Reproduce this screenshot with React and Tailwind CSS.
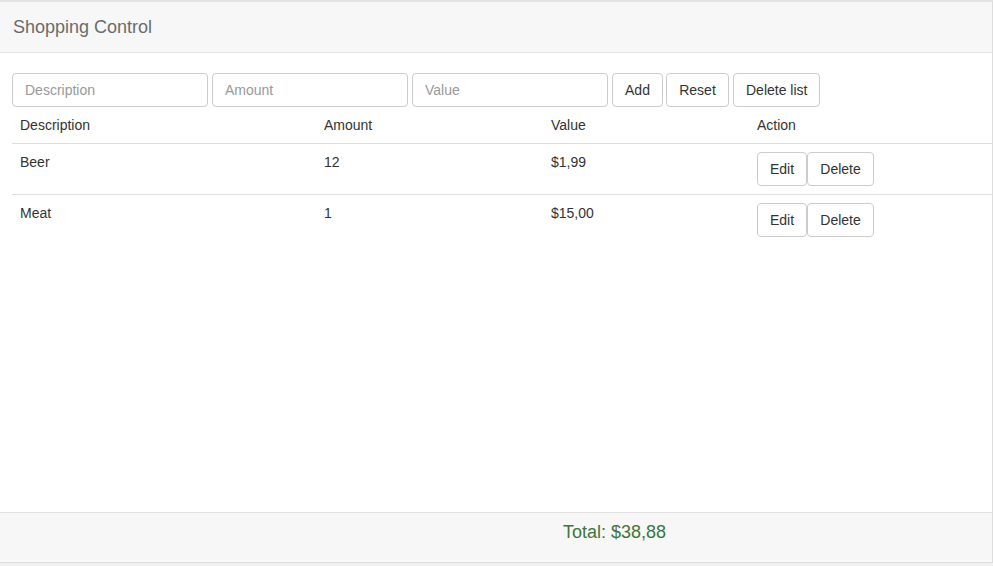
const items = [
  { id: 1, description: 'Beer', amount: 12, value: '$1,99' },
  { id: 2, description: 'Meat', amount: 1, value: '$15,00' },
]

const btn =
  'h-[34px] px-3 bg-white border border-[#ccc] rounded text-[14px] text-[#333] leading-none whitespace-nowrap'

export default function App() {
  return (
    <div
      className="min-h-[566px] bg-[#f0f0f0] text-[14px] text-[#333]"
      style={{ fontFamily: '"Liberation Sans", Arial, sans-serif' }}
    >
      <div className="bg-white border-r border-b border-[#ddd] border-t-2 border-t-[#e3e3e3] flex flex-col h-[563px]">
        <div className="h-[51px] bg-[#f7f7f7] border-b border-[#e6e6e6] flex items-center px-[13px]">
          <h3 className="text-[18px] text-[#6b6b6b]">Shopping Control</h3>
        </div>

        <div className="flex-1 pt-5 pl-3">
          <div className="flex items-center h-[34px]">
            <input placeholder="Description" className="w-[196px] h-[34px] border border-[#ccc] rounded px-3 placeholder:text-[#999] mr-1" />
            <input placeholder="Amount" className="w-[196px] h-[34px] border border-[#ccc] rounded px-3 placeholder:text-[#999] mr-1" />
            <input placeholder="Value" className="w-[196px] h-[34px] border border-[#ccc] rounded px-3 placeholder:text-[#999] mr-1" />
            <button className={`${btn} w-[51px] mr-[3px]`}>Add</button>
            <button className={`${btn} w-[63px] mr-[4px]`}>Reset</button>
            <button className={`${btn} w-[87px]`}>Delete list</button>
          </div>

          <table className="w-[981px] mt-[5px] border-collapse">
            <thead>
              <tr className="border-b border-[#ddd]">
                <th className="w-[304px] text-left font-normal px-2 pt-[3px] pb-[7px]">Description</th>
                <th className="w-[227px] text-left font-normal px-2 pt-[3px] pb-[7px]">Amount</th>
                <th className="w-[206px] text-left font-normal px-2 pt-[3px] pb-[7px]">Value</th>
                <th className="text-left font-normal px-2 pt-[3px] pb-[7px]">Action</th>
              </tr>
            </thead>
            <tbody>
              {items.map((it) => (
                <tr key={it.id} className="border-b border-[#ddd] last:border-b-0 align-top">
                  <td className="px-2 pt-2">{it.description}</td>
                  <td className="px-2 pt-2">{it.amount}</td>
                  <td className="px-2 pt-2">{it.value}</td>
                  <td className="px-2 pt-2 pb-2">
                    <div className="flex">
                      <button className={`${btn} w-[50px]`}>Edit</button>
                      <button className={`${btn} w-[67px]`}>Delete</button>
                    </div>
                  </td>
                </tr>
              ))}
            </tbody>
          </table>
        </div>

        <div className="h-[50px] bg-[#f7f7f7] border-t border-[#e0e0e0] pt-[6px] pl-[563px]">
          <span className="text-[18px] text-[#3c763d]">Total: $38,88</span>
        </div>
      </div>
    </div>
  )
}
